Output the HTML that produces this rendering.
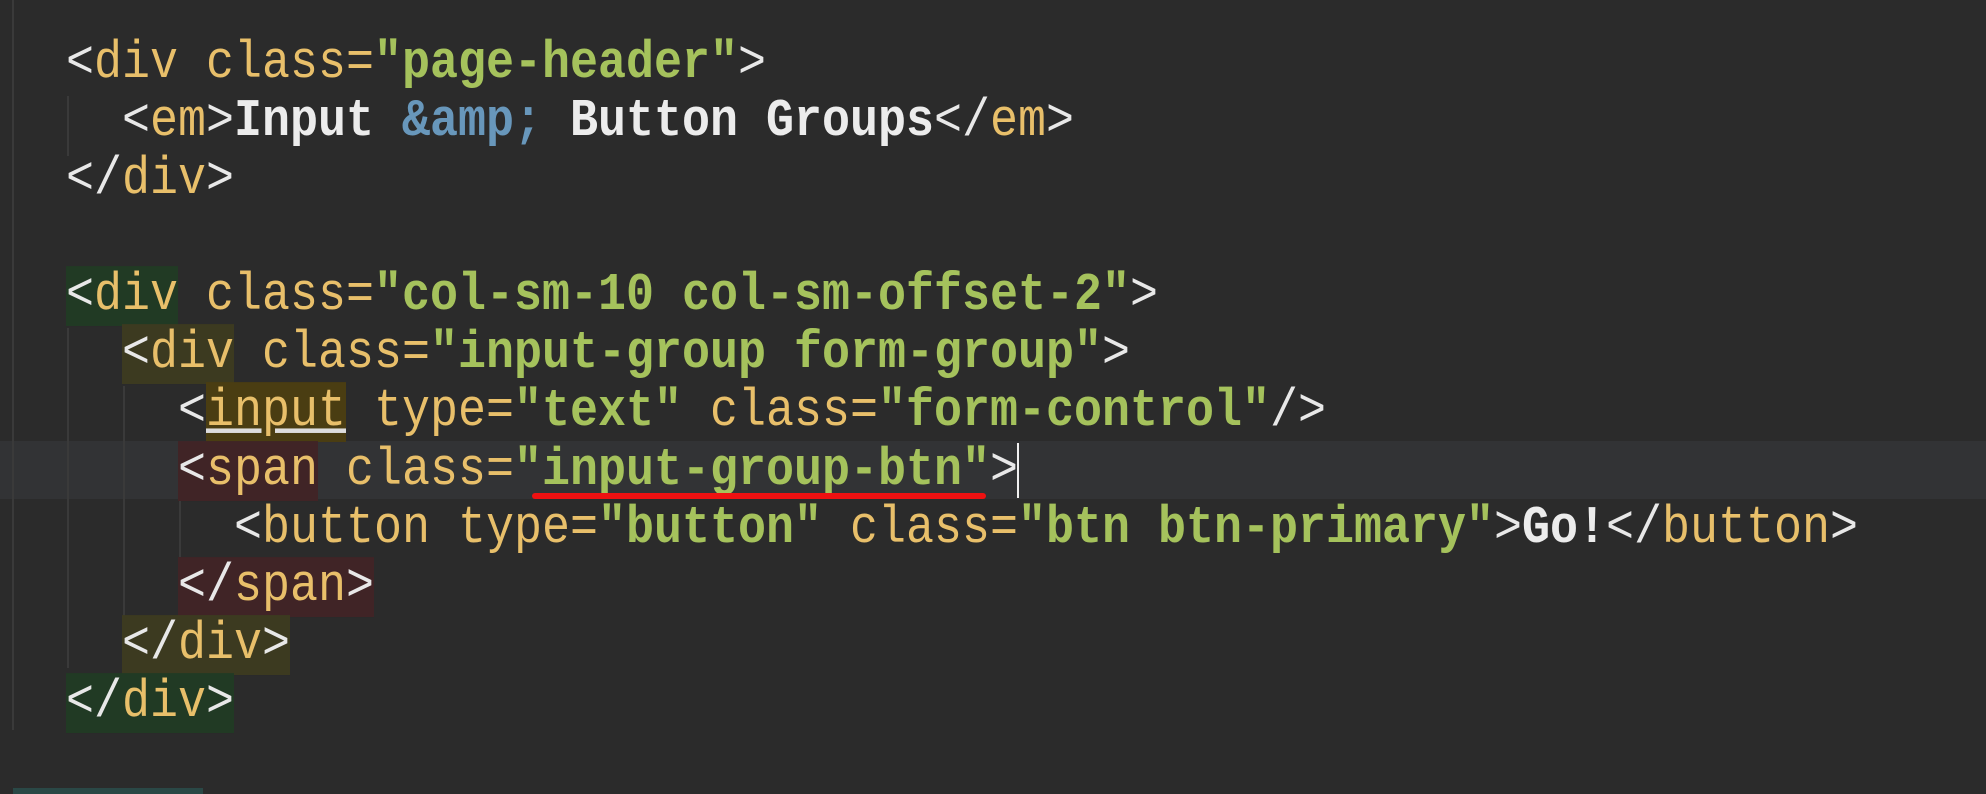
<!DOCTYPE html>
<html><head><meta charset="utf-8"><style>
html,body{margin:0;padding:0;background:#2b2b2b;width:1986px;height:794px;overflow:hidden;position:relative}
.l{position:absolute;left:66px;height:58px;line-height:58px;font-family:"Liberation Mono","DejaVu Sans Mono",monospace;font-size:46.67px;white-space:pre;color:#e8e8e8;transform:scaleY(1.13);transform-origin:50% 55%;margin-top:2px}
.t{color:#e8bf6a}.a{color:#e8bf6a}.s{color:#a5c25c;font-weight:bold}.w{color:#ececec;font-weight:bold}.e{color:#6897bb;font-weight:bold}
.g1{background:#213a24}.g2{background:#3c3a20}.g3{background:#4a3d12}.g4{background:#402426}
.cur{position:absolute;left:0;top:441px;width:1986px;height:58px;background:#323335}
.gv{position:absolute;width:2px;background:#3a3a3a}
</style></head><body>
<div class="cur"></div>
<div class="gv" style="left:12px;top:0;height:730px"></div>
<div class="gv" style="left:67px;top:96px;height:60px"></div>
<div class="gv" style="left:67px;top:328px;height:340px"></div>
<div class="gv" style="left:123px;top:386px;height:230px"></div>
<div class="gv" style="left:179px;top:499px;height:58px"></div>
<div class="l" style="top:34px"><span>&lt;</span><span class="t">div</span> <span class="a">class=</span><span class="s">"page-header"</span>&gt;</div>
<div class="l" style="top:92px">  &lt;<span class="t">em</span>&gt;<span class="w">Input </span><span class="e">&amp;amp;</span><span class="w"> Button Groups</span>&lt;/<span class="t">em</span>&gt;</div>
<div class="l" style="top:150px">&lt;/<span class="t">div</span>&gt;</div>
<div class="l" style="top:266px"><span class="g1">&lt;<span class="t">div</span></span> <span class="a">class=</span><span class="s">"col-sm-10 col-sm-offset-2"</span>&gt;</div>
<div class="l" style="top:324px">  <span class="g2">&lt;<span class="t">div</span></span> <span class="a">class=</span><span class="s">"input-group form-group"</span>&gt;</div>
<div class="l" style="top:382px">    &lt;<span class="t g3" style="text-decoration:underline;text-decoration-color:#ddd">input</span> <span class="a">type=</span><span class="s">"text"</span> <span class="a">class=</span><span class="s">"form-control"</span>/&gt;</div>
<div class="l" style="top:441px">    <span class="g4">&lt;<span class="t">span</span></span> <span class="a">class=</span><span class="s">"input-group-btn"</span>&gt;</div>
<div class="l" style="top:499px">      &lt;<span class="t">button</span> <span class="a">type=</span><span class="s">"button"</span> <span class="a">class=</span><span class="s">"btn btn-primary"</span>&gt;<span class="w">Go!</span>&lt;/<span class="t">button</span>&gt;</div>
<div class="l" style="top:557px">    <span class="g4">&lt;/<span class="t">span</span>&gt;</span></div>
<div class="l" style="top:615px">  <span class="g2">&lt;/<span class="t">div</span>&gt;</span></div>
<div class="l" style="top:673px"><span class="g1">&lt;/<span class="t">div</span>&gt;</span></div>
<div style="position:absolute;left:532px;top:493px;width:454px;height:6px;background:#ee1111;border-radius:3px"></div>
<div style="position:absolute;left:1017px;top:443px;width:2px;height:55px;background:#f0f0f0"></div>
<div style="position:absolute;left:13px;top:788px;width:190px;height:6px;background:#2a4846"></div>
</body></html>
